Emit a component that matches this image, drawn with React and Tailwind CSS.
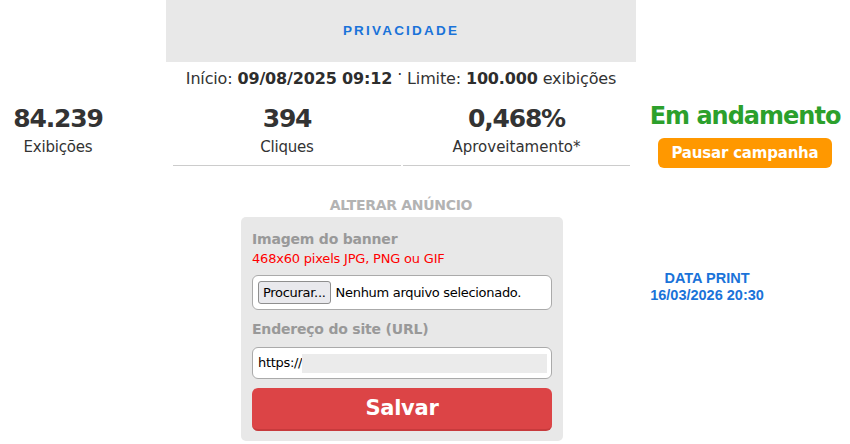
export default function App() {
  const ff = { fontFamily: '"DejaVu Sans", Tahoma, sans-serif' };
  return (
    <div className="w-[850px] h-[444px] bg-white relative overflow-hidden text-[#333]" style={ff}>
      <div className="ml-[166px] w-[470px] h-[62px] bg-[#e8e8e8] flex items-center justify-center">
        <span className="text-[13.5px] font-bold tracking-[2.2px] text-[#1a73d9]" style={{ fontFamily: '"Liberation Sans", Arial, sans-serif' }}>PRIVACIDADE</span>
      </div>
      <div className="ml-[166px] w-[470px] text-center text-[16px] mt-[6px] leading-[22px] tracking-[-0.15px] whitespace-nowrap">
        Início: <b className="text-[#2d2d2d]">09/08/2025 09:12</b> <span className="relative -top-[4px]">·</span> Limite: <b className="text-[#2d2d2d]">100.000</b> exibições
      </div>
      <div className="flex items-start mt-[12px]">
        <div className="w-[116px] shrink-0 flex flex-col items-center">
          <div className="text-[25px] font-bold leading-[34px] tracking-[-1.2px]">84.239</div>
          <div className="text-[15px] leading-[23px] tracking-[-0.2px]">Exibições</div>
        </div>
        <div className="w-[228px] shrink-0 ml-[57px] flex flex-col items-center border-b border-[#ccc] pb-[6px]">
          <div className="text-[25px] font-bold leading-[34px] tracking-[-1.2px]">394</div>
          <div className="text-[15px] leading-[23px] tracking-[-0.2px]">Cliques</div>
        </div>
        <div className="w-[227px] shrink-0 ml-[2px] flex flex-col items-center border-b border-[#ccc] pb-[6px]">
          <div className="text-[25px] font-bold leading-[34px] tracking-[-1.2px]">0,468%</div>
          <div className="text-[15px] leading-[23px] tracking-[0px]">Aproveitamento*</div>
        </div>
        <div className="w-[230px] shrink-0 flex flex-col items-center -mt-[1px]">
          <div className="text-[24px] font-bold leading-[30px] text-[#2ca02c] tracking-[-1px]">Em andamento</div>
          <div className="mt-[7px] h-[30px] w-[174px] rounded-[6px] bg-[#ff9800] text-white font-bold text-[15px] flex items-center justify-center tracking-[-0.2px]">Pausar campanha</div>
        </div>
      </div>
      <div className="ml-[166px] w-[470px] text-center text-[14px] font-bold text-[#b3b3b3] mt-[28px] leading-[18px] tracking-[-0.3px]">ALTERAR ANÚNCIO</div>
      <div className="ml-[241px] mt-[3px] w-[322px] h-[224px] bg-[#e8e8e8] rounded-[5px] px-[11px] pt-[13px]">
        <div className="text-[14px] font-bold text-[#999] leading-[18px] tracking-[-0.2px]">Imagem do banner</div>
        <div className="text-[13px] text-[#ff0000] leading-[22px] tracking-[-0.2px]">468x60 pixels JPG, PNG ou GIF</div>
        <div className="mt-[5px] h-[35px] bg-white border border-[#aaa] rounded-[6px] flex items-center px-[5px]">
          <span className="h-[23px] px-[4px] border border-[#8f8f8f] rounded-[3px] bg-[#e9e9ed] text-[13px] flex items-center text-black tracking-[-0.3px]">Procurar...</span>
          <span className="ml-[5px] text-[13px] text-black tracking-[-0.3px]">Nenhum arquivo selecionado.</span>
        </div>
        <div className="mt-[10px] text-[14px] font-bold text-[#999] leading-[18px] tracking-[-0.2px]">Endereço do site (URL)</div>
        <div className="mt-[9px] h-[32px] bg-white border border-[#aaa] rounded-[6px] flex items-center pl-[5px] pr-[4px]">
          <span className="text-[13px] text-black tracking-[-0.3px]">https://</span>
          <span className="flex-1 h-[19px] bg-[#ebebeb]"></span>
        </div>
        <div className="mt-[9px] h-[43px] bg-[#dc4446] rounded-[6px] border-b-2 border-[#c73a3c] flex items-center justify-center text-white font-bold text-[21px] tracking-[-0.3px]">Salvar</div>
      </div>
      <div className="absolute left-[607px] top-[270px] w-[200px] text-center text-[14.5px] font-bold text-[#1a73d9] leading-[17px]" style={{ fontFamily: '"Liberation Sans", Arial, sans-serif' }}>
        <div>DATA PRINT</div>
        <div>16/03/2026 20:30</div>
      </div>
    </div>
  );
}
